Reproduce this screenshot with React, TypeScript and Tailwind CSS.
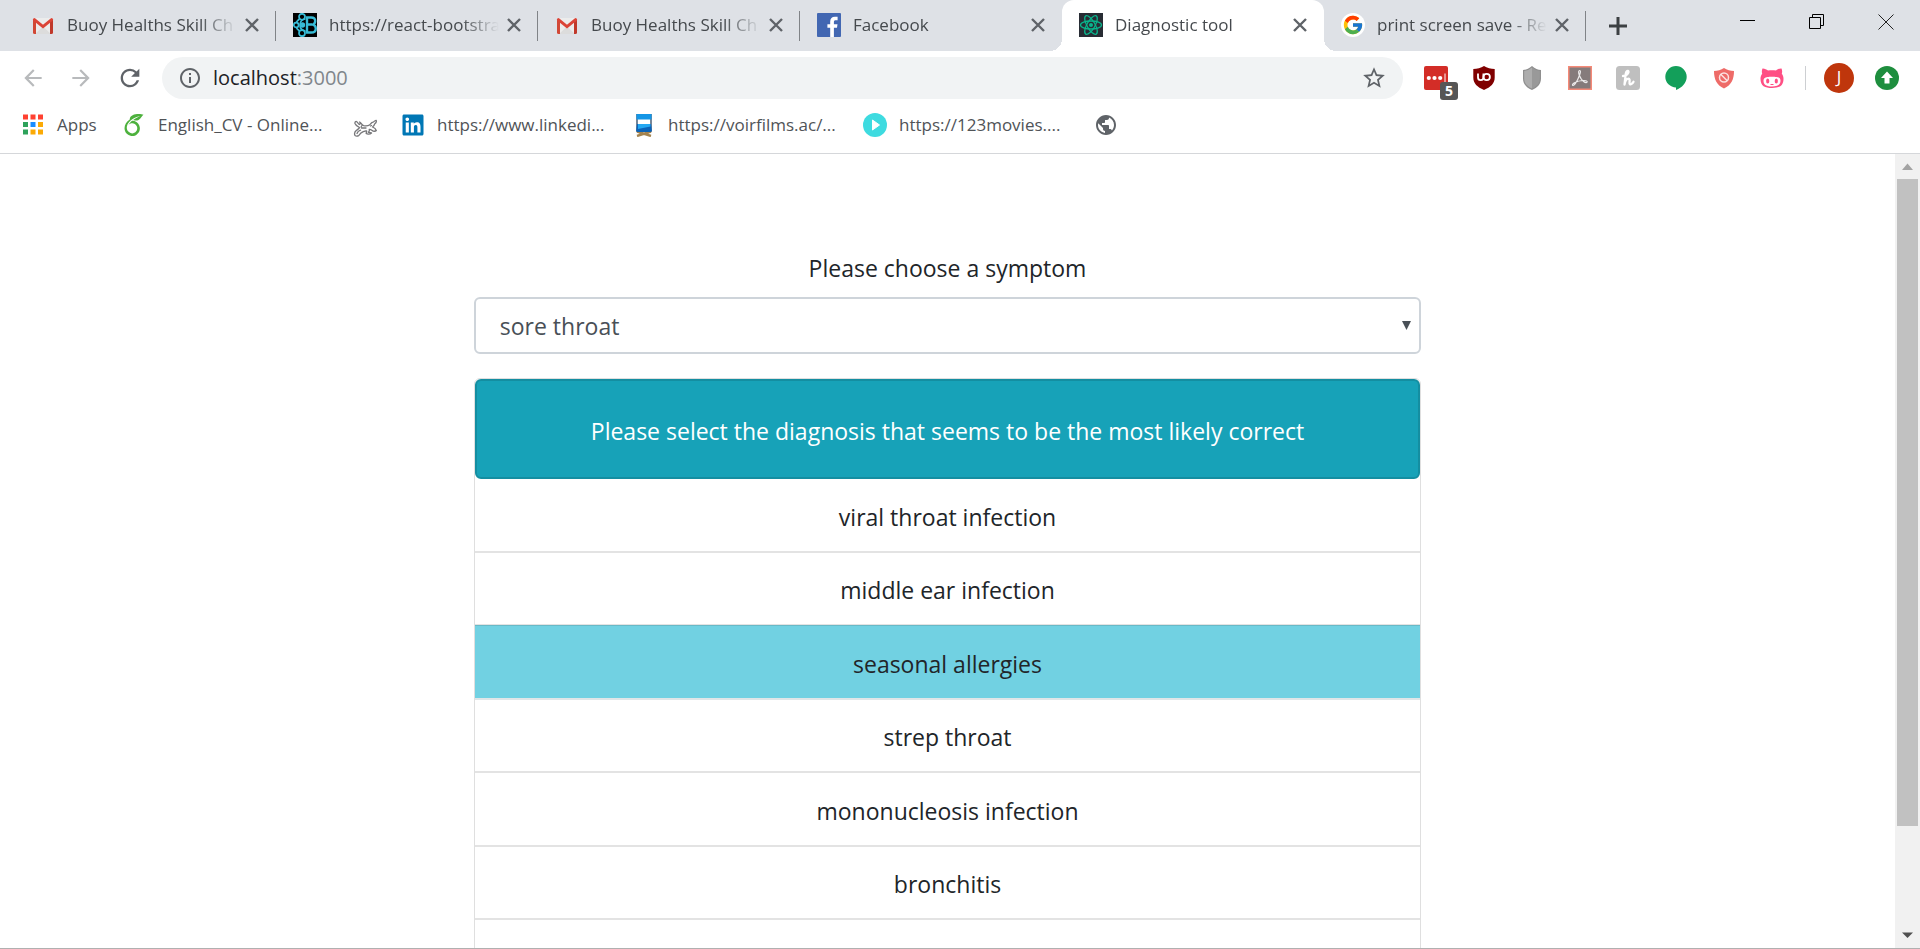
import { useState, type ReactNode } from "react";
import { FcGoogle } from "react-icons/fc";
import { FaLinkedin } from "react-icons/fa";
import {
  MdArrowBack,
  MdArrowForward,
  MdInfoOutline,
  MdPublic,
  MdRefresh,
  MdStarBorder,
} from "react-icons/md";
import { SiOverleaf } from "react-icons/si";

function GmailIcon() {
  return (
    <svg viewBox="0 0 24 24" className="size-6">
      <rect x="2" y="5" width="20" height="16" rx="1.5" fill="#ececec" />
      <path d="M4 21 12 13.5 20 21z" fill="#dcdcdc" />
      <path d="M2 19.5V6.5l3 2.6V21H3.5A1.5 1.5 0 0 1 2 19.5z" fill="#d14836" />
      <path d="M22 19.5V6.5l-3 2.6V21h1.5a1.5 1.5 0 0 0 1.5-1.5z" fill="#c0392b" />
      <path d="M3.4 6.6 12 13.6l8.600-7" fill="none" stroke="#db4437" strokeWidth="3" strokeLinecap="round" />
    </svg>
  );
}

function ReactBootstrapIcon() {
  return (
    <svg viewBox="0 0 24 24" className="size-6" fill="none" stroke="#38bcd6">
      <rect width="24" height="24" fill="#000" stroke="none" />
      <g strokeWidth="1.700">
        <circle cx="9" cy="3.800" r="3" />
        <circle cx="3.200" cy="12" r="2.400" />
        <circle cx="9" cy="20.200" r="3" />
        <path d="M12.500 6C8.500 6.500 7 9 7 12s1.500 5.500 5.500 6M6.500 6C4.500 7.500 3.600 8.500 3.300 9.500M6.500 18c-2-1.500-2.900-2.500-3.200-3.500" />
        <circle cx="9.500" cy="12" r="1.800" fill="#38bcd6" />
      </g>
      <path
        d="M14 4.500h4.200c2.600 0 4 1.400 4 3.600 0 1.800-1 3-2.400 3.500 1.800.4 3 1.700 3 3.800 0 2.600-1.800 4.100-4.600 4.100H14zM14 11.500h5"
        strokeWidth="2.400"
      />
    </svg>
  );
}

function FacebookIcon() {
  return (
    <svg viewBox="0 0 24 24" className="size-6">
      <rect width="24" height="24" rx="1" fill="#4267b2" />
      <path
        d="M13.200 24v-9.200H10.400V11.200h2.800V8.600c0-3 1.800-4.800 4.700-4.800h2.700v3.500h-1.800c-1.400 0-1.900.6-1.900 1.800v2.100h3.600l-.5 3.600h-3.100V24z"
        fill="#fff"
      />
    </svg>
  );
}

function AtomIcon() {
  return (
    <svg viewBox="0 0 24 24" className="size-6">
      <rect width="24" height="24" fill="#282c34" />
      <g fill="none" stroke="#09b58c" strokeWidth="1.300">
        <ellipse cx="12" cy="12" rx="10.500" ry="4" />
        <ellipse cx="12" cy="12" rx="10.500" ry="4" transform="rotate(60 12 12)" />
        <ellipse cx="12" cy="12" rx="10.500" ry="4" transform="rotate(120 12 12)" />
      </g>
      <circle cx="12" cy="12" r="2" fill="#09b58c" />
    </svg>
  );
}

function GoogleIcon() {
  return (
    <span className="flex size-6 items-center justify-center rounded-full bg-white">
      <FcGoogle className="size-[22px]" />
    </span>
  );
}

function AppsIcon() {
  const colors = ["#ff4131", "#ff4131", "#ff4131", "#2ea25b", "#1a8cff", "#fbaa05", "#2ea25b", "#fbaa05", "#fbaa05"];
  return (
    <svg viewBox="0 0 24 24" className="size-6">
      {colors.map((fill, i) => (
        <rect key={i} x={2 + (i % 3) * 7.5} y={1.5 + Math.floor(i / 3) * 7.5} width="5" height="5" fill={fill} />
      ))}
    </svg>
  );
}

function FrogIcon() {
  return (
    <svg viewBox="0 0 24 24" className="size-6" fill="none" stroke="#77777a" strokeWidth="1.300" strokeLinejoin="round" strokeLinecap="round">
      <path d="M2 22.500c-1-2 0-4 1.500-5.200 1.300-1 2.600-1.600 3-2.800C4.500 13.500 2.500 12 2 10.500c-.3-1.500.8-2.500 1.800-1.800C5 9.500 5 11 6.500 11.500c.8-.2.800-1.500.2-2.500 1.800.8 2 3.200 4 3.700 2.500.4 4 .5 5.800-.7 1.500-1 1.500-2.500 3.500-2.800 1-.2 1.500-1.700 3-1.900.8.8.2 2.500-1.200 3.400-.6 1.800-1.300 2.600-2.300 3.300 1.800.6 3.300 2 3.800 3.500-.8 1-2.200.8-3.300.6-1.300-.9-2.300-2-3.800-1.800.5 1.300 0 2.200-.8 3l3.100.7c-1.500 1.500-4.500 1.500-5.500.2.500-1 1-1.500.5-2.400-2 .5-3.500.8-5 1.800-1.500.9-1.800 2.200-2.900 3-1 .6-2.600.7-3.600-.1z" />
      <path d="M4 20.500c.5-1.500 2-2.800 3.500-3.300M8.500 15h4.500M9 12.500l-1 1.500M17.500 13l1-.5" />
    </svg>
  );
}

function ChairIcon() {
  return (
    <svg viewBox="0 0 24 24" className="size-6">
      <path d="m5 18.500 14 4.500M19 18.500 5 23" stroke="#a3834f" strokeWidth="2.400" />
      <path d="M5 1v18M19 1v18" stroke="#3f556e" strokeWidth="1.400" />
      <rect x="4.500" y="1" width="15" height="5.500" fill="#1496e6" />
      <path d="M5 11h14l.8 6.500-1.300 1.500h-13l-1.300-1.500z" fill="#0b63b8" />
      <path d="M6 11h12.500v2.500L6 16z" fill="#24a8f2" />
    </svg>
  );
}

function PlayIcon() {
  return (
    <svg viewBox="0 0 24 24" className="size-6">
      <circle cx="12" cy="12" r="12" fill="#3edbe0" />
      <path d="M9.500 7v10l7-5z" fill="#fff" stroke="#fff" strokeLinejoin="round" />
    </svg>
  );
}

function UblockIcon() {
  return (
    <svg viewBox="0 0 24 24" className="size-6">
      <path d="M12 0c3 2 7 3 10.700 3v8.500c0 6-4 9.500-10.700 12.500C5.300 21 1.300 17.500 1.300 11.500V3C5 3 9 2 12 0z" fill="#800000" />
      <path d="M6 7.500v4a2.700 2.700 0 0 0 5.400 0v-4" fill="none" stroke="#fff" strokeWidth="1.800" />
      <circle cx="14.700" cy="11" r="3.200" fill="none" stroke="#fff" strokeWidth="1.800" />
    </svg>
  );
}

function GreyShieldIcon() {
  return (
    <svg viewBox="0 0 24 24" className="size-6">
      <path d="M12 0c3 2.500 6 4 9 4v8.500c0 5.500-3.500 9-9 11.500-5.500-2.500-9-6-9-11.500V4c3 0 6-1.500 9-4z" fill="#8f8f8f" />
      <path d="M12 1.500c2.500 2 5 3.200 7.800 3.500v7.500c0 4.700-3 7.800-7.800 10z" fill="#999" />
      <path d="M12 1.500C9.500 3.500 7 4.700 4.200 5v7.500c0 4.700 3 7.800 7.800 10z" fill="#adadad" />
    </svg>
  );
}

function AcrobatIcon() {
  return (
    <svg viewBox="0 0 24 24" className="size-6">
      <rect x="0.750" y="0.750" width="22.500" height="22.500" fill="#857b7b" stroke="#f58a78" strokeWidth="1.500" />
      <path
        d="M11.500 4.500c-1.300.2-1 2.500-.2 4.700 1 2.800 2.600 5 4.600 6.500 1.400 1 3.200 1.200 3.300.1.100-1-1.900-1.400-4-1.300-3 .1-6.500 1-8.700 2.200-1.700 1-2.500 2.300-1.700 2.700 1.200.6 3.300-2.600 4.900-5.900 1.400-3 2.600-6 2.700-7.600.1-1-.3-1.500-.9-1.400z"
        fill="none"
        stroke="#fff"
        strokeOpacity="0.850"
        strokeWidth="1.200"
      />
    </svg>
  );
}

function HoneyIcon() {
  return (
    <svg viewBox="0 0 24 24" className="size-6">
      <rect width="24" height="24" rx="3.500" fill="#bfbfbf" />
      <path
        d="M7 10c3.500-.5 6-2.500 5.500-4.500-.4-1.300-2.300-.5-2.700 2L8.500 18.500c.7-3.500 2.200-5.800 4-5.800 2.200 0 .3 4.300 1.300 5.300 1 .8 2.800-.5 3.700-2.200"
        fill="none"
        stroke="#fff"
        strokeWidth="2.300"
        strokeLinecap="round"
        strokeLinejoin="round"
      />
    </svg>
  );
}

function HangoutsIcon() {
  return (
    <svg viewBox="0 0 24 24" className="size-6">
      <path d="M12 0a10.700 10.700 0 0 1 10.700 10.700c0 6-4.700 11-10.700 13.300v-2.600A10.700 10.700 0 0 1 12 0z" fill="#139f5a" />
    </svg>
  );
}

function RedShieldIcon() {
  return (
    <svg viewBox="0 0 24 24" className="size-6">
      <path d="M12 2c3 2 6.500 3 10 3 0 8-2.500 14-10 17.500C4.500 19 2 13 2 5c3.500 0 7-1 10-3z" fill="#ee6b68" />
      <g fill="none" stroke="#fff" strokeOpacity="0.800" strokeWidth="1.500">
        <circle cx="12" cy="11.500" r="4.500" />
        <path d="m9 8.500 6 6" />
      </g>
    </svg>
  );
}

function PinkCatIcon() {
  return (
    <svg viewBox="0 0 24 24" className="size-6">
      <path
        d="M2.500 2.500C4.500 2.300 6.500 3.500 8 4.500c2.500-.5 5.500-.5 8 0 1.500-1 3.500-2.200 5.500-2 .8 1.800.8 3.700.3 5.200 1 1.300 1.700 3 1.700 5C23.500 20 19 22 12 22S.5 20 .5 12.700c0-2 .7-3.700 1.700-5-.5-1.500-.5-3.400.3-5.200z"
        fill="#ff4f84"
      />
      <path d="M7.500 11c2-.4 7-.4 9 0 3 .3 4 1.500 4 3.800 0 4.200-3.500 5.700-8.500 5.700s-8.500-1.500-8.500-5.700c0-2.300 1-3.500 4-3.800z" fill="#fff" />
      <ellipse cx="7.700" cy="15" rx="1.600" ry="2.500" fill="#ff4f84" />
      <ellipse cx="16.300" cy="15" rx="1.600" ry="2.500" fill="#ff4f84" />
      <path d="M10.500 18.500h3" stroke="#ff4f84" />
    </svg>
  );
}

function PasswordIcon() {
  return (
    <span className="relative block size-6">
      <svg viewBox="0 0 24 24" className="size-6">
        <rect width="24" height="24" rx="2" fill="#d32d27" />
        <circle cx="4.800" cy="12" r="2.100" fill="#fff" />
        <circle cx="10.500" cy="12" r="2.100" fill="#fff" />
        <circle cx="16.200" cy="12" r="2.100" fill="#fff" />
        <path d="M21 7.500v9" stroke="#fff" />
      </svg>
      <span className="absolute top-4 left-4 flex size-[18px] items-center justify-center rounded-[3px] bg-[#565656] text-sm font-bold text-white">
        5
      </span>
    </span>
  );
}

type Tab = { title: string; icon: ReactNode };

const tabs: Tab[] = [
  { title: "Buoy Healths Skill Ch", icon: <GmailIcon /> },
  { title: "https://react-bootstra", icon: <ReactBootstrapIcon /> },
  { title: "Buoy Healths Skill Ch", icon: <GmailIcon /> },
  { title: "Facebook", icon: <FacebookIcon /> },
  { title: "Diagnostic tool", icon: <AtomIcon /> },
  { title: "print screen save - Re", icon: <GoogleIcon /> },
];

const activeTab = 4;

function TabStrip() {
  return (
    <header className="flex h-[51px] bg-[#dee1e6] pl-[14px] text-[#45494d]">
      <div role="tablist" className="flex">
        {tabs.map((tab, i) => {
          const active = i === activeTab;
          const divided = !active && i !== activeTab - 1;
          return (
            <div
              key={i}
              role="tab"
              aria-selected={active}
              className={
                active
                  ? "relative flex w-[262px] items-center rounded-t-xl bg-white pb-0.5 pl-[17px]"
                  : "relative flex w-[262px] items-center pb-0.5 pl-[17px]"
              }
            >
              {active && (
                <>
                  <span className="absolute bottom-0 -left-3 size-3 bg-[radial-gradient(circle_at_top_left,transparent_12px,#fff_12px)]" />
                  <span className="absolute -right-3 bottom-0 size-3 bg-[radial-gradient(circle_at_top_right,transparent_12px,#fff_12px)]" />
                </>
              )}
              {tab.icon}
              <span className="ml-3 w-[170px] text-[17px] leading-6 whitespace-nowrap [mask-image:linear-gradient(to_right,#000_78%,transparent_100%)]">
                {tab.title}
              </span>
              <button aria-label="Close tab" className="ml-2">
                <svg viewBox="0 0 14 14" className="size-3.5" stroke="#5f6368" strokeWidth="2.400">
                  <path d="m1 1 12 12M13 1 1 13" />
                </svg>
              </button>
              {divided && <span className="absolute top-[11px] right-0 h-[30px] w-px bg-[#808387]" />}
            </div>
          );
        })}
      </div>
      <button aria-label="New tab" className="ml-[22px]">
        <svg viewBox="0 0 20 20" className="size-5" stroke="#3c4043" strokeWidth="3">
          <path d="M10 1v18M1 10h18" />
        </svg>
      </button>
      <div className="mr-[26px] ml-auto flex h-[43px] items-center gap-[53px]">
        <button aria-label="Minimize">
          <svg viewBox="0 0 16 16" className="size-4">
            <path d="M0 6.500h15" stroke="#000" />
          </svg>
        </button>
        <button aria-label="Restore">
          <svg viewBox="0 0 16 16" className="size-4" fill="none" stroke="#000">
            <path d="M.5 3.500h11v11H.5zM3.500 3.500v-3h11v11h-3" />
          </svg>
        </button>
        <button aria-label="Close window">
          <svg viewBox="0 0 16 16" className="size-4" stroke="#222">
            <path d="m.5.500 15 15M15.500.500l-15 15" />
          </svg>
        </button>
      </div>
    </header>
  );
}

const extensions: { name: string; icon: ReactNode }[] = [
  { name: "Password manager", icon: <PasswordIcon /> },
  { name: "Content blocker", icon: <UblockIcon /> },
  { name: "Shield", icon: <GreyShieldIcon /> },
  { name: "PDF", icon: <AcrobatIcon /> },
  { name: "Coupons", icon: <HoneyIcon /> },
  { name: "Chat", icon: <HangoutsIcon /> },
  { name: "Ad blocker", icon: <RedShieldIcon /> },
  { name: "Cat", icon: <PinkCatIcon /> },
];

function Toolbar() {
  return (
    <div className="flex h-[54px] items-center bg-white pr-[21px] pl-5">
      <div className="flex gap-[22px] text-[#b8babc]">
        <button aria-label="Back">
          <MdArrowBack className="size-[26px]" />
        </button>
        <button aria-label="Forward">
          <MdArrowForward className="size-[26px]" />
        </button>
        <button aria-label="Reload" className="text-[#5f6368]">
          <MdRefresh className="size-7" />
        </button>
      </div>
      <div className="ml-[18px] flex h-[42px] flex-1 items-center rounded-full bg-[#f1f3f4] px-4 text-[#5f6368]">
        <MdInfoOutline className="size-6" />
        <div aria-label="Address" className="ml-[11px] flex-1 text-xl text-[#80868b]">
          <span className="text-[#202124]">localhost</span>:3000
        </div>
        <button aria-label="Bookmark this page">
          <MdStarBorder className="size-[26px]" />
        </button>
      </div>
      <div className="ml-[21px] flex gap-6">
        {extensions.map((ext) => (
          <button key={ext.name} aria-label={ext.name}>
            {ext.icon}
          </button>
        ))}
      </div>
      <span className="ml-[21px] h-6 w-px bg-[#cdcfd2]" />
      <button aria-label="Profile" className="ml-[18px] size-[30px] rounded-full bg-[#bf360c] pb-0.5 text-[17px] leading-7 text-white">
        J
      </button>
      <button aria-label="Update" className="ml-[21px]">
        <svg viewBox="0 0 24 24" className="size-6">
          <circle cx="12" cy="12" r="12" fill="#1e8e3e" />
          <path d="m12 5.500 6 6.500h-3.500v5.500h-5V12H6z" fill="#fff" />
        </svg>
      </button>
    </div>
  );
}

const bookmarks: { label: string; icon: ReactNode }[] = [
  { label: "English_CV - Online...", icon: <SiOverleaf className="size-[22px] text-[#4db13d]" /> },
  { label: "", icon: <FrogIcon /> },
  { label: "https://www.linkedi...", icon: <FaLinkedin className="size-6 text-[#0077b5]" /> },
  { label: "https://voirfilms.ac/...", icon: <ChairIcon /> },
  { label: "https://123movies....", icon: <PlayIcon /> },
  { label: "", icon: <MdPublic className="size-[26px] text-[#5f6368]" /> },
];

function BookmarksBar() {
  return (
    <nav className="flex h-[49px] items-start gap-6 border-b border-[#d5d7da] bg-white pt-2 pl-[21px] text-[17px] leading-6 text-[#505357]">
      <a href="#" className="flex w-[77px] items-center gap-3">
        <AppsIcon />
        Apps
      </a>
      {bookmarks.map((b, i) => (
        <a key={i} href="#" aria-label={b.label || "Bookmark"} className="flex items-center gap-3">
          <span className="flex size-6 items-center justify-center">{b.icon}</span>
          {b.label && <span className="w-[171px] whitespace-nowrap">{b.label}</span>}
        </a>
      ))}
    </nav>
  );
}

const diagnoses = [
  "viral throat infection",
  "middle ear infection",
  "seasonal allergies",
  "strep throat",
  "mononucleosis infection",
  "bronchitis",
];

function Scrollbar() {
  return (
    <div aria-hidden className="flex w-[25px] shrink-0 flex-col bg-[#f1f1f1]">
      <svg viewBox="0 0 25 25" className="size-[25px]">
        <path d="M12.500 9.500 18 16H7z" fill="#a3a3a3" />
      </svg>
      <div className="flex-1 px-0.5">
        <div className="h-[87%] bg-[#c1c1c1]" />
      </div>
      <svg viewBox="0 0 25 25" className="size-[25px]">
        <path d="M7 9.500h11L12.500 15z" fill="#505050" />
      </svg>
    </div>
  );
}

function DiagnosticTool() {
  const [selected, setSelected] = useState("seasonal allergies");
  return (
    <main className="flex-1 overflow-hidden pt-24 text-[23px] leading-9 text-[#212529]">
      <div className="mx-auto w-1/2">
        <label htmlFor="symptom" className="mb-[11px] block text-center">
          Please choose a symptom
        </label>
        <div className="relative">
          <select
            id="symptom"
            className="block h-[57px] w-full appearance-none rounded-md border-2 border-[#ced4da] bg-white px-6 text-[#495057]"
          >
            <option>sore throat</option>
          </select>
          <svg viewBox="0 0 10 10" className="pointer-events-none absolute top-6 right-2.5 size-[9px]">
            <path d="M0 0h10L5 10z" fill="#495057" />
          </svg>
        </div>
        <section className="mt-6 rounded-md border border-[#dfdfdf]">
          <h1 className="rounded-md border-2 border-[#148ea1] bg-[#17a2b8] pt-8 pb-7 text-center text-white">
            Please select the diagnosis that seems to be the most likely correct
          </h1>
          <ul className="grid h-[441px] auto-rows-fr">
            {diagnoses.map((name) => (
              <li key={name} className="grid">
                <button
                  onClick={() => setSelected(name)}
                  className={
                    name === selected
                      ? "border-b-2 border-[#dfe6e8] bg-[#71d1e2] pt-1 shadow-[0_-1px_0_#68b9c7]"
                      : "border-b-2 border-[#e3e3e3] pt-1"
                  }
                >
                  {name}
                </button>
              </li>
            ))}
          </ul>
          <div className="h-20" />
        </section>
      </div>
    </main>
  );
}

export default function App() {
  return (
    <div className="flex h-screen flex-col overflow-hidden border-b border-[#b0b0b0] bg-white font-['Segoe_UI','Open_Sans','Noto_Sans',sans-serif]">
      <TabStrip />
      <Toolbar />
      <BookmarksBar />
      <div className="flex min-h-0 flex-1">
        <DiagnosticTool />
        <Scrollbar />
      </div>
    </div>
  );
}
